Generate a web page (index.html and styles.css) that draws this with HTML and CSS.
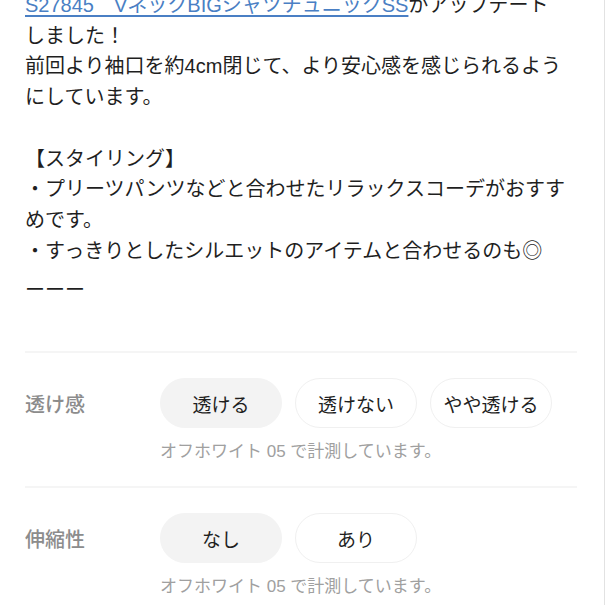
FILE: index.html
```html
<!DOCTYPE html>
<html lang="ja">
<head>
<meta charset="utf-8">
<link rel="stylesheet" href="styles.css">
</head>
<body>
<div class="page">
  <div class="desc">
    <p class="para"><a class="link" href="#">S27845　VネックBIGシャツチュニックSS</a>がアップデート<br>しました！<br>前回より袖口を約4cm閉じて、より安心感を感じられるようにしています。</p>
    <p class="para gap">【スタイリング】<br>・プリーツパンツなどと合わせたリラックスコーデがおすすめです。<br>・すっきりとしたシルエットのアイテムと合わせるのも◎</p>
    <p class="para dash">ーーー</p>
  </div>

  <div class="spec">
    <div class="divider"></div>
    <div class="spec-row">
      <div class="spec-label">透け感</div>
      <div class="pills">
        <span class="pill selected">透ける</span>
        <span class="pill">透けない</span>
        <span class="pill">やや透ける</span>
      </div>
    </div>
    <div class="caption">オフホワイト 05 で計測しています。</div>
  </div>

  <div class="spec">
    <div class="divider"></div>
    <div class="spec-row">
      <div class="spec-label">伸縮性</div>
      <div class="pills">
        <span class="pill selected">なし</span>
        <span class="pill">あり</span>
      </div>
    </div>
    <div class="caption">オフホワイト 05 で計測しています。</div>
  </div>
</div>
</body>
</html>
```
FILE: styles.css
```css
html, body {
  margin: 0;
  padding: 0;
  background: #ffffff;
}

.page {
  box-sizing: border-box;
  width: 605px;
  min-height: 605px;
  padding: 0 27px 0 25px;
  border-right: 1px solid #e2e2e2;
  font-family: "Liberation Sans", "Noto Sans CJK JP", sans-serif;
  color: #1f1f1f;
  overflow: hidden;
}

.desc {
  margin-top: -10px;
  font-size: 20px;
  line-height: 30.7px;
}

.para {
  margin: 0;
}

.para.gap {
  margin-top: 30.7px;
}

.para.dash {
  margin-top: 9px;
}

.link {
  color: #4a7fc4;
  text-decoration: underline;
  text-underline-offset: 3px;
}

.spec {
  display: flex;
  flex-direction: column;
}

.divider {
  height: 2px;
  background: #f5f5f5;
  margin-top: 45px;
}

.spec-row {
  display: flex;
  align-items: center;
  margin-top: 25px;
}

.spec-label {
  width: 135px;
  flex: none;
  font-size: 20px;
  color: #8c8c8c;
  font-weight: 500;
}

.pills {
  display: flex;
  gap: 13px;
}

.pill {
  box-sizing: border-box;
  width: 122px;
  height: 50px;
  border-radius: 25px;
  border: 1px solid #f0f0f0;
  background: #ffffff;
  display: flex;
  align-items: center;
  justify-content: center;
  font-size: 19px;
  color: #1f1f1f;
}

.pill.selected {
  background: #f3f3f3;
  border-color: #f3f3f3;
}

.caption {
  margin-left: 135px;
  margin-top: 12px;
  font-size: 17px;
  line-height: 24px;
  color: #a0a0a0;
}

.spec + .spec .divider {
  margin-top: 22px;
}
```
